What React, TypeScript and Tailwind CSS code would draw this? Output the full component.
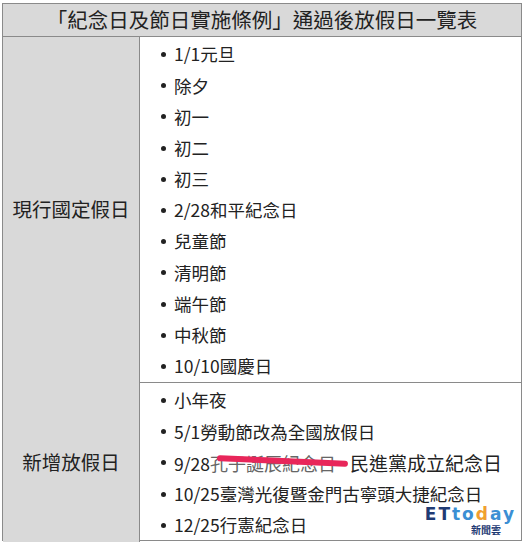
import React from "react";

const font = { fontFamily: '"Noto Sans CJK TC", "Noto Sans", sans-serif' };

function Item({ children }: { children: React.ReactNode }) {
  return (
    <li className="flex h-[31.2px] items-center">
      <span className="mr-[8px] ml-[21px] mb-[2px] inline-block h-[5px] w-[5px] rounded-full bg-[#222]" />
      <span className="pb-[3px] text-[17.5px] leading-none text-[#222]">{children}</span>
    </li>
  );
}

export default function App() {
  const current = [
    "1/1元旦",
    "除夕",
    "初一",
    "初二",
    "初三",
    "2/28和平紀念日",
    "兒童節",
    "清明節",
    "端午節",
    "中秋節",
    "10/10國慶日",
  ];
  return (
    <div className="h-[543px] w-[524px] overflow-hidden bg-white pt-[3px] pl-[2px]" style={font}>
      <div className="w-[520px] border border-[#8a8a8a]">
        <div className="flex h-[33px] items-center justify-center border-b border-[#8a8a8a] bg-[#d9d9d9] pb-[1px] text-[20.5px] leading-none text-[#222]">
          「紀念日及節日實施條例」通過後放假日一覽表
        </div>
        <div className="grid h-[346px] grid-cols-[137px_1fr] border-b border-[#8a8a8a]">
          <div className="flex items-center justify-center border-r border-[#8a8a8a] bg-[#d9d9d9] pb-[2px] text-[19.5px] text-[#222]">
            現行國定假日
          </div>
          <ul className="flex flex-col pt-[3px]">
            {current.map((c) => (
              <Item key={c}>{c}</Item>
            ))}
          </ul>
        </div>
        <div className="relative grid h-[157px] grid-cols-[137px_1fr]">
          <div className="flex items-center justify-center border-r border-[#8a8a8a] bg-[#d9d9d9] pb-[2px] text-[19.5px] text-[#222]">
            新增放假日
          </div>
          <ul className="flex flex-col pt-[3px]">
            <Item>小年夜</Item>
            <Item>5/1勞動節改為全國放假日</Item>
            <Item>
              <span className="relative">
                9/28
                <span className="text-[18px] text-[#666]">孔子誕辰紀念日</span>
                <span className="absolute left-[43px] top-[7px] h-[6px] w-[131px] rotate-[2.5deg] rounded-full bg-[#e8265a]" />
              </span>
              <span className="ml-[14px] text-[19px]">民進黨成立紀念日</span>
            </Item>
            <Item>10/25臺灣光復暨金門古寧頭大捷紀念日</Item>
            <Item>12/25行憲紀念日</Item>
          </ul>
          <div className="absolute right-[5px] bottom-[5px] flex flex-col items-end leading-none">
            <div
              className="text-[17px] font-bold tracking-[2px]"
              style={{ fontFamily: '"DejaVu Sans", sans-serif' }}
            >
              <span className="text-[#1f3b74]">ET</span>
              <span className="text-[#3b8fd4]">to</span>
              <span className="text-[#f0a030]">d</span>
              <span className="text-[#3b8fd4]">ay</span>
            </div>
            <div className="mr-[15px] mt-[2px] text-[10px] font-bold text-[#1f3b74]">新聞雲</div>
          </div>
        </div>
      </div>
    </div>
  );
}
